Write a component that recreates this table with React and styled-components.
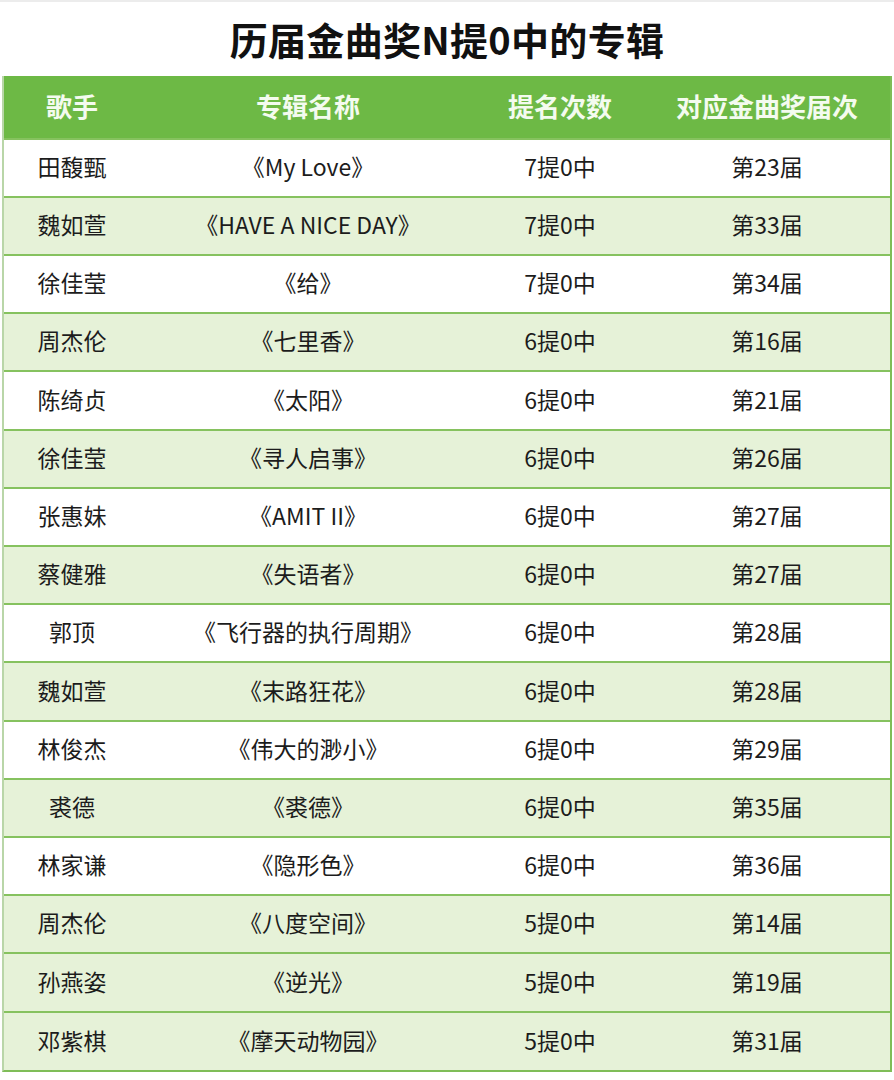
import React from "react";
import styled, { createGlobalStyle } from "styled-components";

const Global = createGlobalStyle`
  html, body { margin: 0; padding: 0; background: #ffffff; }
  body { font-family: "Noto Sans CJK SC", "Noto Sans", sans-serif; }
`;

const Page = styled.div`
  width: 894px;
  height: 1080px;
  background: #fff;
  display: flex;
  flex-direction: column;
  overflow: hidden;
  border-top: 2px solid #ececec;
  box-sizing: border-box;
`;

const Title = styled.h1`
  margin: 0;
  height: 74px;
  display: flex;
  align-items: center;
  justify-content: center;
  font-size: 38px;
  font-weight: 700;
  color: #111;
  letter-spacing: 0.3px;
  padding-bottom: 2px;
  box-sizing: border-box;
`;

const Table = styled.div`
  margin-left: 2px;
  width: 890px;
  box-sizing: border-box;
  border-left: 2px solid #b9d6a8;
  border-right: 2px solid #7fbd58;
  border-bottom: 2px solid #7fbd58;
  display: flex;
  flex-direction: column;
`;

const Row = styled.div`
  display: grid;
  grid-template-columns: 136px 336px 168px 246px;
  height: ${(p) => p.$h}px;
  box-sizing: border-box;
  background: ${(p) => (p.$head ? "#6db945" : p.$alt ? "#e6f2d8" : "#ffffff")};
  border-top: ${(p) => (p.$head ? "none" : "2px solid #86c25f")};
`;

const Cell = styled.div`
  display: flex;
  align-items: center;
  justify-content: center;
  font-size: ${(p) => (p.$head ? "26px" : "23px")};
  font-weight: ${(p) => (p.$head ? 700 : 400)};
  color: ${(p) => (p.$head ? "#f4fbef" : "#1c1c1c")};
  white-space: nowrap;
  padding-bottom: 4px;
`;

const data = [
  ["田馥甄", "《My Love》", "7提0中", "第23届"],
  ["魏如萱", "《HAVE A NICE DAY》", "7提0中", "第33届"],
  ["徐佳莹", "《给》", "7提0中", "第34届"],
  ["周杰伦", "《七里香》", "6提0中", "第16届"],
  ["陈绮贞", "《太阳》", "6提0中", "第21届"],
  ["徐佳莹", "《寻人启事》", "6提0中", "第26届"],
  ["张惠妹", "《AMIT II》", "6提0中", "第27届"],
  ["蔡健雅", "《失语者》", "6提0中", "第27届"],
  ["郭顶", "《飞行器的执行周期》", "6提0中", "第28届"],
  ["魏如萱", "《末路狂花》", "6提0中", "第28届"],
  ["林俊杰", "《伟大的渺小》", "6提0中", "第29届"],
  ["裘德", "《裘德》", "6提0中", "第35届"],
  ["林家谦", "《隐形色》", "6提0中", "第36届"],
  ["周杰伦", "《八度空间》", "5提0中", "第14届"],
  ["孙燕姿", "《逆光》", "5提0中", "第19届"],
  ["邓紫棋", "《摩天动物园》", "5提0中", "第31届"],
];

const heads = ["歌手", "专辑名称", "提名次数", "对应金曲奖届次"];

export default function App() {
  return (
    <>
      <Global />
      <Page>
        <Title>历届金曲奖N提0中的专辑</Title>
        <Table>
          <Row $head $h={62}>
            {heads.map((h) => (
              <Cell $head key={h}>{h}</Cell>
            ))}
          </Row>
          {data.map((r, i) => (
            <Row key={i} $alt={i % 2 === 1 || i >= 13} $h={i % 5 === 4 || i === 15 ? 59 : 58}>
              {r.map((c, j) => (
                <Cell key={j}>{c}</Cell>
              ))}
            </Row>
          ))}
        </Table>
      </Page>
    </>
  );
}
